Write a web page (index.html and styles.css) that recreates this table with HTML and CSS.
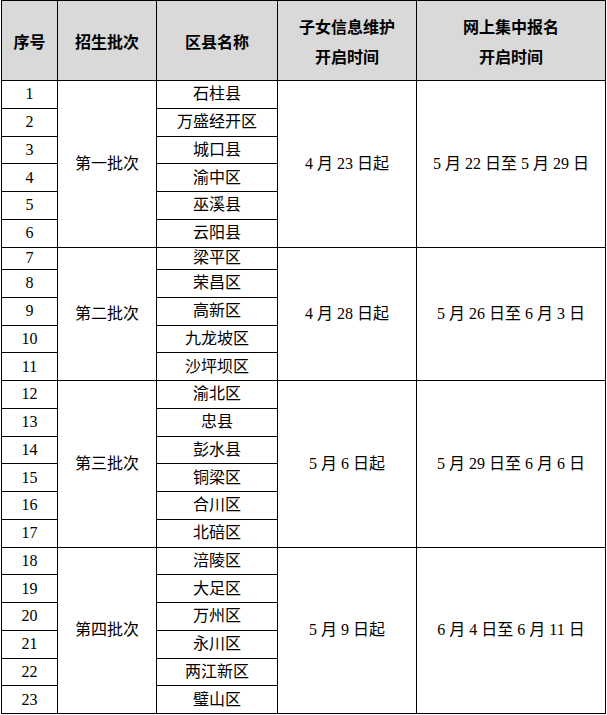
FILE: index.html
```html
<!DOCTYPE html>
<html lang="zh">
<head>
<meta charset="utf-8">
<title>招生批次</title>
<link rel="stylesheet" href="styles.css">
</head>
<body>
<table class="sched">
  <colgroup>
    <col class="c1"><col class="c2"><col class="c3"><col class="c4"><col class="c5">
  </colgroup>
  <thead>
    <tr class="head">
      <th>序号</th>
      <th>招生批次</th>
      <th>区县名称</th>
      <th>子女信息维护<br>开启时间</th>
      <th>网上集中报名<br>开启时间</th>
    </tr>
  </thead>
  <tbody>
    <tr><td>1</td><td rowspan="6">第一批次</td><td>石柱县</td><td rowspan="6">4 月 23 日起</td><td rowspan="6">5 月 22 日至 5 月 29 日</td></tr>
    <tr><td>2</td><td>万盛经开区</td></tr>
    <tr><td>3</td><td>城口县</td></tr>
    <tr><td>4</td><td>渝中区</td></tr>
    <tr><td>5</td><td>巫溪县</td></tr>
    <tr><td>6</td><td>云阳县</td></tr>
    <tr class="short"><td>7</td><td rowspan="5">第二批次</td><td>梁平区</td><td rowspan="5">4 月 28 日起</td><td rowspan="5">5 月 26 日至 6 月 3 日</td></tr>
    <tr><td>8</td><td>荣昌区</td></tr>
    <tr><td>9</td><td>高新区</td></tr>
    <tr><td>10</td><td>九龙坡区</td></tr>
    <tr><td>11</td><td>沙坪坝区</td></tr>
    <tr><td>12</td><td rowspan="6">第三批次</td><td>渝北区</td><td rowspan="6">5 月 6 日起</td><td rowspan="6">5 月 29 日至 6 月 6 日</td></tr>
    <tr><td>13</td><td>忠县</td></tr>
    <tr><td>14</td><td>彭水县</td></tr>
    <tr><td>15</td><td>铜梁区</td></tr>
    <tr><td>16</td><td>合川区</td></tr>
    <tr><td>17</td><td>北碚区</td></tr>
    <tr><td>18</td><td rowspan="6">第四批次</td><td>涪陵区</td><td rowspan="6">5 月 9 日起</td><td rowspan="6">6 月 4 日至 6 月 11 日</td></tr>
    <tr><td>19</td><td>大足区</td></tr>
    <tr><td>20</td><td>万州区</td></tr>
    <tr><td>21</td><td>永川区</td></tr>
    <tr><td>22</td><td>两江新区</td></tr>
    <tr><td>23</td><td>璧山区</td></tr>
  </tbody>
</table>
</body>
</html>
```

FILE: styles.css
```css
html, body {
  margin: 0;
  padding: 0;
  background: #ffffff;
}

.sched {
  margin: 0 0 0 1px;
  width: 605px;
  table-layout: fixed;
  border-collapse: collapse;
  font-family: "Liberation Serif", "Noto Sans CJK SC", serif;
  font-size: 16px;
  color: #000;
}

.c1 { width: 56px; }
.c2 { width: 99px; }
.c3 { width: 121px; }
.c4 { width: 139px; }
.c5 { width: 189px; }

.sched th,
.sched td {
  border: 1px solid #000;
  padding: 0;
  text-align: center;
  vertical-align: middle;
  line-height: 20px;
}

.head {
  height: 80px;
}

.sched th {
  background: #d9d9d9;
  font-family: "Noto Sans CJK SC", sans-serif;
  font-weight: bold;
  font-size: 16px;
  line-height: 30px;
}

.sched tbody tr {
  height: 27.75px;
}

.sched tbody tr.short {
  height: 22.5px;
}
```
